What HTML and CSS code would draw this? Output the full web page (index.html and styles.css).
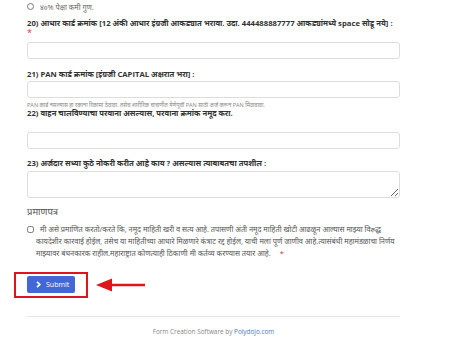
FILE: index.html
```html
<!DOCTYPE html>
<html>
<head>
    <title>अर्ज</title>
    <link rel="stylesheet" href="styles.css">
</head>
<body>
    <div class="form-wrap">
        <div class="radio-row">
            <input type="radio" name="marks"> <span>४०% पेक्षा कमी गुण.</span>
        </div>

        <div class="field f20">
            <label>20) आधार कार्ड क्रमांक [12 अंकी आधार इंग्रजी आकड्यात भरावा. उदा. 444488887777 आकड्यांमध्ये space सोडू नये] :</label>
            <div class="req">*</div>
            <input type="text" class="box">
        </div>

        <div class="field f21">
            <label>21) PAN कार्ड क्रमांक [इंग्रजी CAPITAL अक्षरात भरा] :</label>
            <input type="text" class="box">
            <p class="help">PAN कार्ड नसल्यास हा रकाना रिकामा ठेवावा. तसेच शारीरिक चाचणीत येणेपूर्वी PAN साठी अर्ज करून PAN मिळवावा.</p>
        </div>

        <div class="field f22">
            <label>22) वाहन चालविण्याचा परवाना असल्यास, परवाना क्रमांक नमूद करा.</label>
            <input type="text" class="box">
        </div>

        <div class="field f23">
            <label>23) अर्जदार सध्या कुठे नोकरी करीत आहे काय ? असल्यास त्याबाबतचा तपशील :</label>
            <textarea class="box area"></textarea>
        </div>

        <div class="cert">
            <div class="cert-title">प्रमाणपत्र</div>
            <div class="cert-row">
                <input type="checkbox"><span>मी असे प्रमाणित करतो/करते कि, नमूद माहिती खरी व सत्य आहे. तपासणी अंती नमूद माहिती खोटी आढळून आल्यास माझ्या विरुद्ध कायदेशीर कारवाई होईल, तसेच या माहितीच्या आधारे मिळणारे कंत्राट रद्द होईल, याची मला पूर्ण जाणीव आहे.त्यासंबंधी महामंडळाचा निर्णय माझ्यावर बंधनकारक राहील.महाराष्ट्रात कोणत्याही ठिकाणी मी कर्तव्य करण्यास तयार आहे.</span><b class="req-inline">*</b>
            </div>
        </div>

        <div class="submit-row">
            <div class="highlight">
                <button class="submit-btn">
                    <svg width="5" height="7" viewBox="0 0 5 7"><path d="M1 0.8 L3.8 3.5 L1 6.2" fill="none" stroke="#fff" stroke-width="1.7"/></svg>
                    Submit
                </button>
            </div>
            <svg class="arrow" width="52" height="16" viewBox="0 0 52 16">
                <path d="M50 8 H14" stroke="#e0141c" stroke-width="2.6"/>
                <path d="M1 8 L17 1.5 L17 14.5 Z" fill="#e0141c"/>
            </svg>
        </div>

        <hr class="sep">
        <div class="footer">Form Creation Software by <span class="brand">Polydojo.com</span></div>
    </div>
</body>
</html>
```

FILE: styles.css
```css
body {
    margin: 0;
    background: #fff;
    font-family: 'Open Sans', 'Noto Sans', sans-serif;
    color: #333;
}

.form-wrap {
    width: 373px;
    padding-left: 27px;
}

.radio-row {
    display: flex;
    align-items: center;
    gap: 6px;
    height: 11px;
    padding-top: 1px;
    font-size: 7.3px;
    color: #666;
}

.radio-row input {
    margin: 0;
    width: 7px;
    height: 7px;
}

.field label {
    display: block;
    font-size: 7.7px;
    font-weight: bold;
    color: #333;
    line-height: 10px;
    white-space: nowrap;
}

.f20 { margin-top: 6px; }
.f21 { margin-top: 10px; }
.f22 { margin-top: -1px; }
.f23 { margin-top: 9px; }

.req {
    color: #d9313c;
    font-size: 9px;
    line-height: 9px;
    height: 9px;
}

.box {
    display: block;
    width: 373px;
    height: 17px;
    box-sizing: border-box;
    border: 1px solid #ddd;
    border-radius: 3px;
    margin: 0;
    background: #fff;
}

.f20 .box { margin-top: 5px; }
.f21 .box { margin-top: 2px; }
.f22 .box { margin-top: 14px; }
.f23 .box { margin-top: 3px; }

.area {
    height: 27px;
    resize: vertical;
}

.help {
    font-size: 5.6px;
    color: #888;
    margin: 3px 0 0 0;
    line-height: 8px;
    white-space: nowrap;
}

.cert {
    margin-top: 8px;
}

.cert-title {
    font-size: 9.5px;
    color: #555;
    line-height: 12px;
}

.cert-row {
    margin-top: 5px;
    padding-left: 9px;
    font-size: 7.4px;
    line-height: 12px;
    color: #555;
}

.cert-row input {
    margin: 0 6px 0 -9px;
    width: 7px;
    height: 7px;
    vertical-align: -1px;
}

.req-inline {
    color: #d9313c;
    font-weight: normal;
    padding-left: 9px;
}

.submit-row {
    display: flex;
    align-items: center;
    margin-top: 13px;
    margin-left: -13px;
}

.highlight {
    border: 2px solid #e0141c;
    padding: 2px 11px 3px 11px;
}

.submit-btn {
    display: flex;
    align-items: center;
    gap: 5px;
    width: 48px;
    height: 17px;
    padding: 0 0 0 9px;
    border: none;
    border-radius: 2px;
    background: #4268d8;
    color: #fff;
    font-family: 'Open Sans', sans-serif;
    font-size: 7px;
}

.arrow {
    margin-left: 7px;
}

.sep {
    border: none;
    border-top: 1px solid #e6e6e6;
    margin: 18px 0 0 0;
}

.footer {
    text-align: center;
    font-size: 6.4px;
    color: #888;
    margin-top: 10px;
}

.brand {
    color: #4a76b8;
}
```
